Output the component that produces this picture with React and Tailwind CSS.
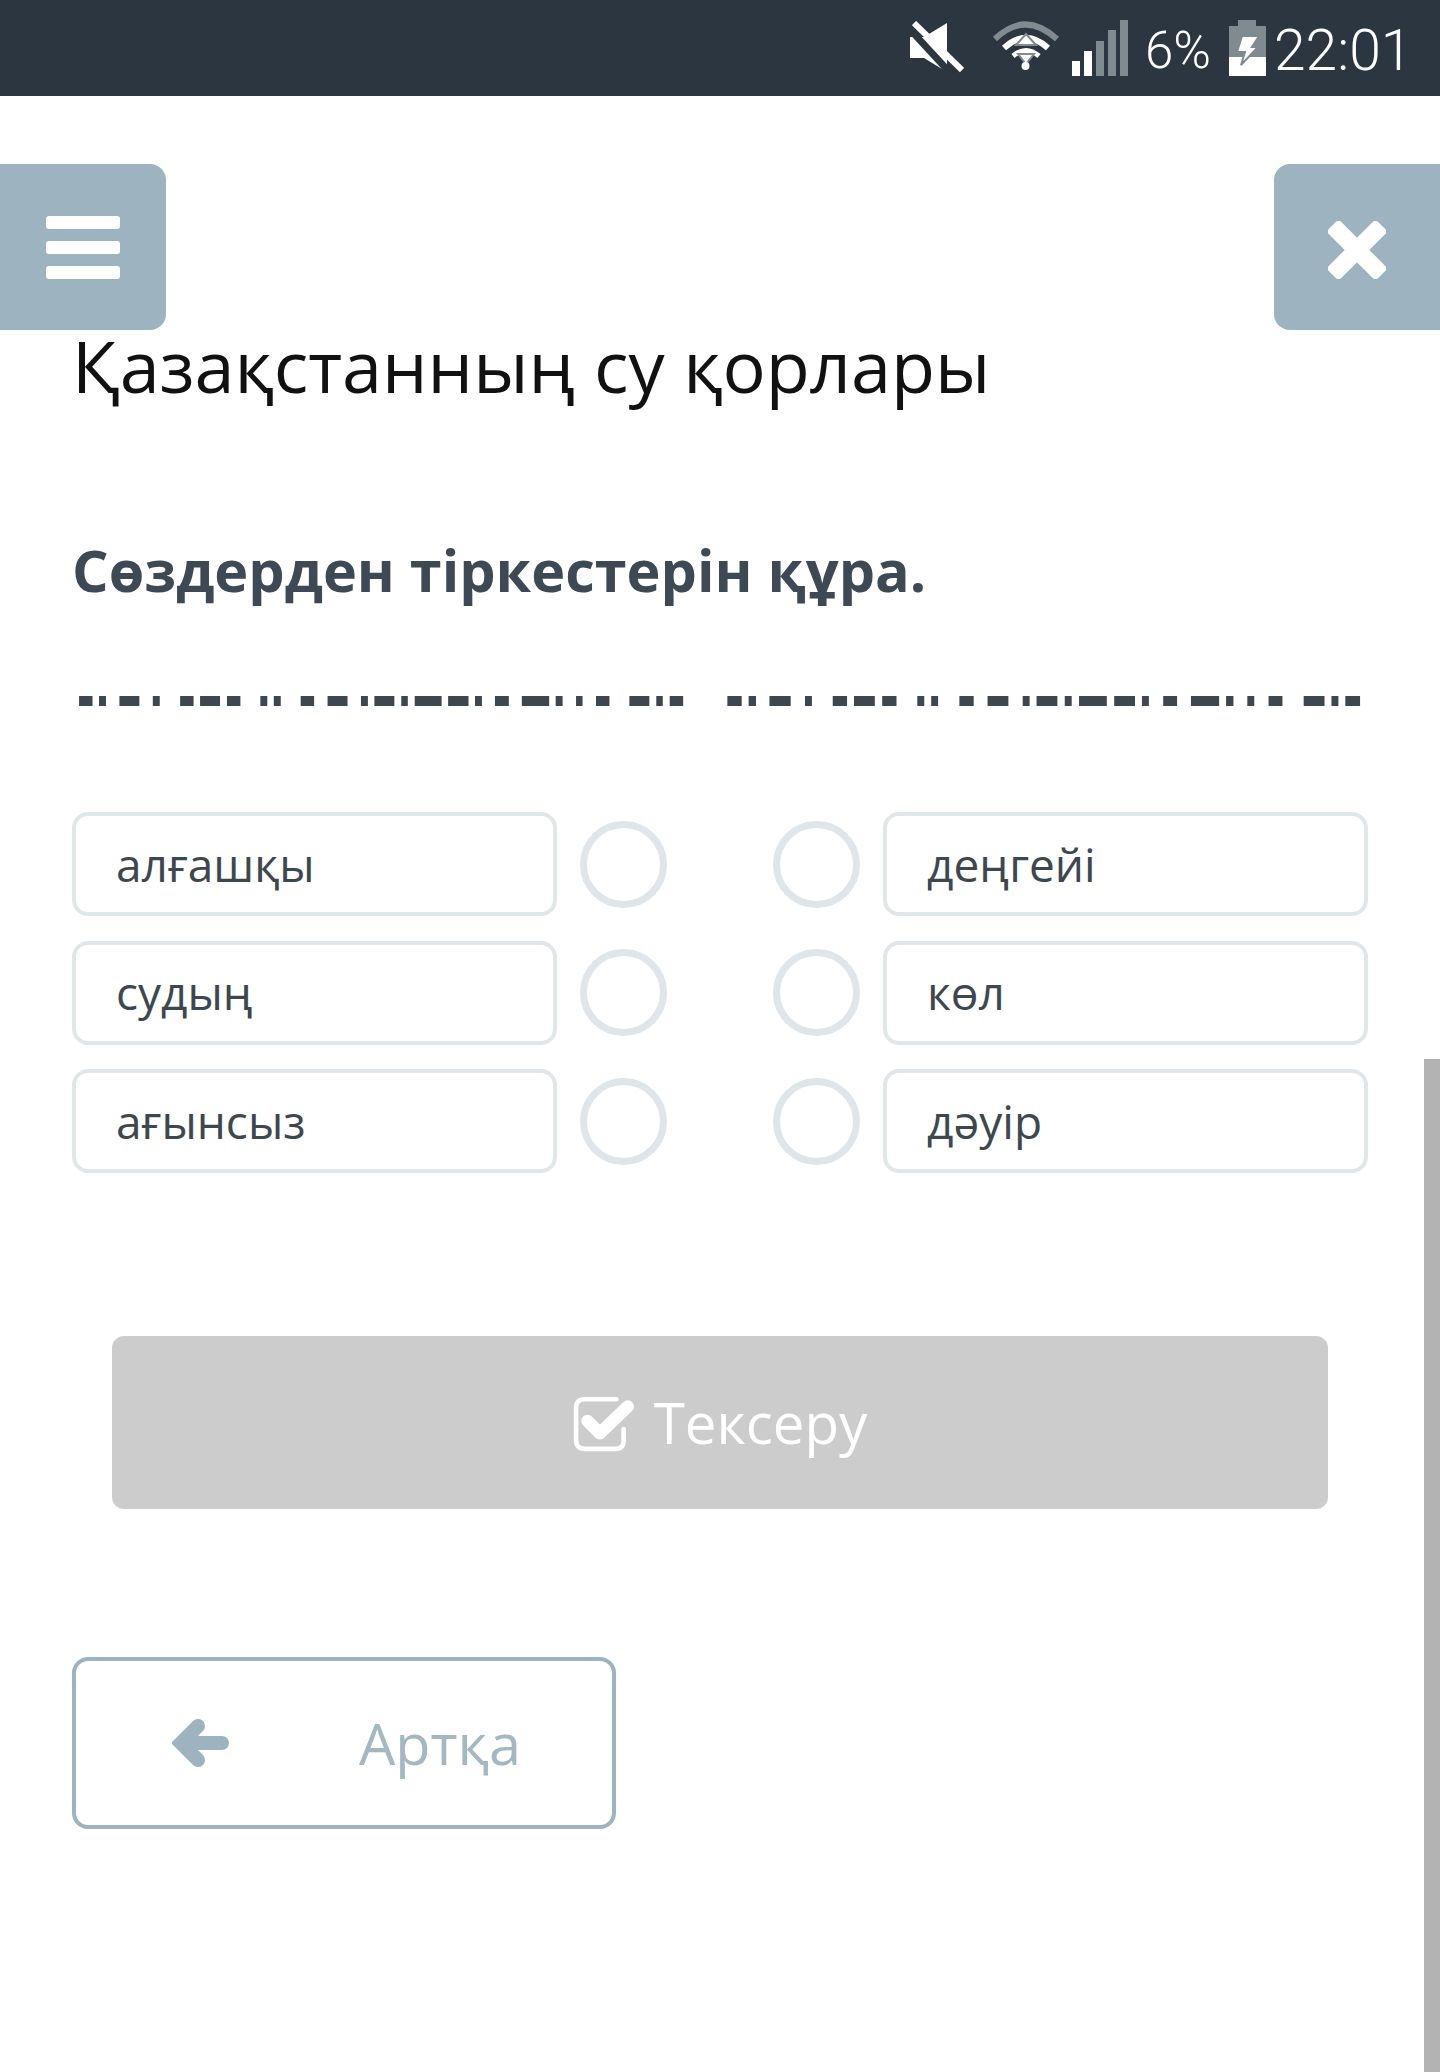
const leftDashes = [
  [44, 75], [90, 106], [137, 183], [214, 230], [277, 308], [323, 369], [385, 416], [462, 478], [493, 509],
  [555, 586], [617, 663], [694, 710], [725, 771], [787, 802], [818, 880], [895, 942], [957, 973], [1003, 1035],
  [1065, 1128], [1143, 1159], [1190, 1205], [1236, 1267], [1313, 1359], [1375, 1390], [1406, 1437],
];

const rightDashes = [
  [17, 50], [66, 83], [114, 163], [196, 212], [260, 293], [309, 357], [374, 407], [455, 471], [487, 503],
  [552, 585], [617, 665], [698, 714], [730, 778], [795, 811], [828, 892], [909, 957], [973, 989], [1022, 1054],
  [1086, 1151], [1167, 1184], [1216, 1232], [1265, 1297], [1346, 1394], [1410, 1426], [1442, 1476],
];

const rows = [
  ["алғашқы", "деңгейі"],
  ["судың", "көл"],
  ["ағынсыз", "дәуір"],
];

function DashGroup({ items, width }) {
  return (
    <svg width={width} height="10" viewBox={`0 0 ${width * 2.306} 10`} preserveAspectRatio="none" className="shrink-0">
      {items.map(([a, b]) => (
        <rect key={a} x={a} y="0" width={b - a} height="10" fill="#3d474f" />
      ))}
    </svg>
  );
}

function MuteIcon() {
  return (
    <svg width="54" height="52" viewBox="0 0 54 52" className="mb-[3px]">
      <path d="M0 16H14L37 2V51L14 37H0Z" fill="#fff" />
      <path d="M-4 4L44 56" stroke="#2b3640" strokeWidth="7" />
      <path d="M4 2L52 49" stroke="#fff" strokeWidth="6" />
    </svg>
  );
}

function WifiIcon() {
  return (
    <svg width="68" height="50" viewBox="0 0 68 50" fill="none" className="mb-1">
      <path d="M3 18Q33 -11 65 18" stroke="#7f8a91" strokeWidth="6" />
      <path d="M12 27Q34 7 56 27" stroke="#fff" strokeWidth="6" />
      <path d="M34 13L44 24H24Z" fill="#fff" stroke="#7f8a91" strokeWidth="2" />
      <path d="M21 35Q34 24 47 35" stroke="#fff" strokeWidth="5" />
      <path d="M26 33L34 43L42 33Z" fill="#fff" stroke="#7f8a91" strokeWidth="2" />
      <circle cx="33.5" cy="45" r="4" fill="#fff" />
    </svg>
  );
}

function SignalBars() {
  return (
    <div className="flex h-14 items-end gap-1">
      <div className="h-[15px] w-2 bg-white" />
      <div className="h-[25px] w-2 bg-white" />
      <div className="h-[35px] w-2 bg-[#7f8a91]" />
      <div className="h-[46px] w-2 bg-[#7f8a91]" />
      <div className="h-14 w-2 bg-[#7f8a91]" />
    </div>
  );
}

function BatteryIcon() {
  return (
    <svg width="37" height="56" viewBox="0 0 37 56">
      <path d="M9 0H27V6H37V37H0V6H9Z" fill="#7f8a91" />
      <rect x="0" y="37" width="37" height="19" fill="#fff" />
      <path d="M13 16H30L23 27H29L12 45L16 32H8Z" fill="#fff" stroke="#7f8a91" strokeWidth="2" />
    </svg>
  );
}

function Word({ children }) {
  return (
    <div className="flex h-[104px] w-[485px] items-center rounded-2xl border-4 border-[#e1e7e9] pl-[40px] text-[46px] text-[#3d474e]">
      {children}
    </div>
  );
}

function Dot() {
  return <div className="h-[87px] w-[87px] shrink-0 rounded-full border-[7px] border-[#dfe5e8]" />;
}

export default function App() {
  return (
    <div className="relative h-[2072px] w-[1440px] overflow-hidden bg-white font-['Open_Sans',sans-serif]">
      <div className="flex h-24 items-center bg-[#2b3640] pl-[910px] font-['Roboto',sans-serif] font-light text-white">
        <MuteIcon />
        <div className="ml-7">
          <WifiIcon />
        </div>
        <div className="ml-3">
          <SignalBars />
        </div>
        <span className="ml-[17px] mt-1 w-[67px] text-[51px] leading-none">6%</span>
        <div className="ml-[17px]">
          <BatteryIcon />
        </div>
        <span className="ml-[8px] mt-1 text-[57px] leading-none">22:01</span>
      </div>

      <div className="mt-[68px] flex items-start justify-between">
        <button type="button" className="flex h-[166px] w-[166px] flex-col items-center justify-center gap-[12px] rounded-r-2xl bg-[#9db3bf]">
          <span className="h-[13px] w-[74px] rounded-[3px] bg-white" />
          <span className="h-[13px] w-[74px] rounded-[3px] bg-white" />
          <span className="h-[13px] w-[74px] rounded-[3px] bg-white" />
        </button>
        <button type="button" className="flex h-[166px] w-[166px] items-center justify-center rounded-l-2xl bg-[#9db3bf] pt-[5px]">
          <svg width="58" height="58" viewBox="0 0 60 60">
            <rect x="-6" y="21" width="72" height="18" rx="4" fill="#fff" transform="rotate(45 30 30)" />
            <rect x="-6" y="21" width="72" height="18" rx="4" fill="#fff" transform="rotate(-45 30 30)" />
          </svg>
        </button>
      </div>

      <h1 className="-mt-[5px] pl-[72px] text-[72px] font-normal leading-[80px] text-[#111]">Қазақстанның су қорлары</h1>

      <h2 className="mt-[131px] pl-[72px] text-[57.5px] font-bold leading-[68px] text-[#3d4a55]">Сөздерден тіркестерін құра.</h2>

      <div className="mt-[92px] flex pl-[60px]">
        <DashGroup items={leftDashes} width={660} />
        <DashGroup items={rightDashes} width={680} />
      </div>

      <div className="mt-[106px] flex flex-col gap-[24.5px] px-[72px]">
        {rows.map(([left, right]) => (
          <div key={left} className="flex items-center">
            <Word>{left}</Word>
            <div className="ml-[23px]">
              <Dot />
            </div>
            <div className="ml-[106px]">
              <Dot />
            </div>
            <div className="ml-[23px]">
              <Word>{right}</Word>
            </div>
          </div>
        ))}
      </div>

      <div className="mt-[163px] px-[112px]">
        <button type="button" className="flex h-[173px] w-full items-center justify-center gap-[19px] rounded-xl bg-[#cccccc] pt-[2px] text-[56.5px] text-white">
          <svg width="62" height="56" viewBox="0 0 60 54" fill="none">
            <path d="M42 3H11C6 3 3 6 3 11V43C3 48 6 51 11 51H42C47 51 49 48 49 43V32" stroke="#fff" strokeWidth="4.5" strokeLinecap="round" />
            <path d="M14 24L26 36L53 10" stroke="#fff" strokeWidth="12" strokeLinecap="round" strokeLinejoin="round" />
          </svg>
          <span>Тексеру</span>
        </button>
      </div>

      <div className="mt-[148px] pl-[72px]">
        <button type="button" className="flex h-[172px] w-[544px] items-center rounded-2xl border-4 border-[#9db3bf] pl-[96px] text-[57.5px] text-[#a3b8c3]">
          <svg width="60" height="50" viewBox="0 0 60 50" fill="none">
            <path d="M10 25H50" stroke="#9db3bf" strokeWidth="14" strokeLinecap="round" />
            <path d="M26 8L9 25L26 42" stroke="#9db3bf" strokeWidth="14" strokeLinecap="round" />
          </svg>
          <span className="ml-[127px]">Артқа</span>
        </button>
      </div>

      <div className="absolute bottom-0 right-0 top-[1059px] w-4 bg-[#b3b3b3]" />
    </div>
  );
}
